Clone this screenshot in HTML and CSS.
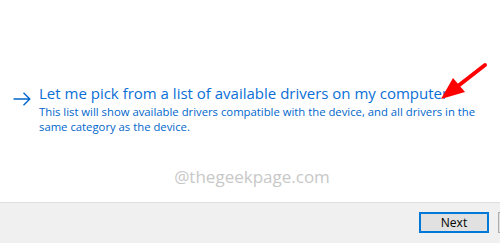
FILE: index.html
```html
<!DOCTYPE html>
<html>
<head>
<meta charset="utf-8">
<link rel="stylesheet" href="styles.css">
</head>
<body>
<div class="main">
  <div class="option">
    <svg class="go" width="18" height="14" viewBox="0 0 18 14"><path d="M0.5 7H17M10.5 0.8L16.8 7L10.5 13.2" fill="none" stroke="#0066cc" stroke-width="1.4"/></svg>
    <div class="texts">
      <div class="title">Let me pick from a list of available drivers on my computer</div>
      <div class="desc">This list will show available drivers compatible with the device, and all drivers in the same category as the device.</div>
    </div>
  </div>
  <div class="mark">@thegeekpage.com</div>
  <svg class="red" width="60" height="45" viewBox="0 0 60 45"><path d="M45 3L18 24" stroke="#ff0000" stroke-width="4" stroke-linecap="round"/><path d="M1 37L13 16L25 30Z" fill="#ff0000"/></svg>
</div>
<div class="footer">
  <button class="btn primary">Next</button>
  <button class="btn" aria-label="Cancel"></button>
</div>
</body>
</html>
```
FILE: styles.css
```css
html, body { margin: 0; padding: 0; }
body { width: 500px; height: 243px; overflow: hidden; font-family: "Open Sans", "Noto Sans", sans-serif; background: #fff; }
.main { height: 202px; position: relative; box-sizing: border-box; padding-top: 83px; }
.option { display: flex; align-items: flex-start; padding-left: 13px; gap: 8px; }
.go { margin-top: 9px; flex: none; }
.texts { color: #0066cc; }
.title { font-size: 15px; line-height: 20px; color: #0a6fd6; }
.desc { font-size: 11.3px; line-height: 15px; width: 445px; color: #0066cc; margin-top: 1px; }
.mark { margin-top: 31px; text-align: center; color: #c8c8c8; font-size: 17px; padding-left: 4px; }
.red { position: absolute; left: 440px; top: 62px; }
.footer { height: 41px; background: #f0f0f0; border-top: 1px solid #dfdfdf; display: flex; align-items: flex-start; padding-top: 9px; padding-left: 419px; box-sizing: border-box; gap: 9px; }
.btn { width: 70px; height: 21px; flex: none; background: #e1e1e1; border: 1px solid #adadad; font-family: "Open Sans", sans-serif; font-size: 12px; color: #000; padding: 0; }
.btn.primary { border: 2px solid #0078d7; }
```
